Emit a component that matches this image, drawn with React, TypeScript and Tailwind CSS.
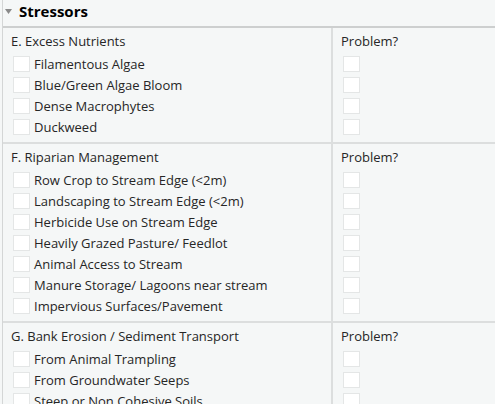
import React from 'react';

interface Section {
  title: string;
  items: string[];
}

const sections: Section[] = [
  {
    title: 'E. Excess Nutrients',
    items: ['Filamentous Algae', 'Blue/Green Algae Bloom', 'Dense Macrophytes', 'Duckweed'],
  },
  {
    title: 'F. Riparian Management',
    items: [
      'Row Crop to Stream Edge (<2m)',
      'Landscaping to Stream Edge (<2m)',
      'Herbicide Use on Stream Edge',
      'Heavily Grazed Pasture/ Feedlot',
      'Animal Access to Stream',
      'Manure Storage/ Lagoons near stream',
      'Impervious Surfaces/Pavement',
    ],
  },
  {
    title: 'G. Bank Erosion / Sediment Transport',
    items: ['From Animal Trampling', 'From Groundwater Seeps', 'Steep or Non Cohesive Soils', 'Other'],
  },
];

function Box() {
  return <span className="block w-[17px] h-[16px] bg-white border border-[#e4e6e6] shrink-0" />;
}

export default function App() {
  return (
    <div
      className="w-[495px] h-[404px] overflow-hidden bg-[#f5f7f7] text-[#262626]"
      style={{ fontFamily: '"Open Sans", "Noto Sans", sans-serif' }}
    >
      <div className="ml-[2px] border-l border-[#d4d6d6] h-full">
        {/* Header */}
        <div className="h-[28px] flex items-center border-b-2 border-[#cdcfcf] pb-[3px]">
          <svg width="7" height="5" viewBox="0 0 7 5" className="ml-[2px] mr-[7px]">
            <path d="M0 0 L7 0 L3.5 5 Z" fill="#8a8a8a" />
          </svg>
          <span className="text-[15px] font-bold text-black leading-none">Stressors</span>
        </div>

        {sections.map((s) => (
          <div key={s.title} className="flex border-b-2 border-[#dcdede]">
            <div className="w-[330px] pl-[8px] pt-[5px] pb-[5px] border-r-2 border-[#dcdede]">
              <div className="text-[13px] leading-[16px] mb-[4px] whitespace-nowrap">{s.title}</div>
              {s.items.map((it) => (
                <div key={it} className="h-[21px] flex items-center pl-[2px] gap-[4px]">
                  <Box />
                  <span className="text-[13px] leading-[16px] whitespace-nowrap">{it}</span>
                </div>
              ))}
            </div>
            <div className="flex-1 pl-[8px] pt-[5px] pb-[5px]">
              <div className="text-[13px] leading-[16px] mb-[4px]">Problem?</div>
              {s.items.map((it) => (
                <div key={it} className="h-[21px] flex items-center pl-[2px]">
                  <Box />
                </div>
              ))}
            </div>
          </div>
        ))}
      </div>
    </div>
  );
}
